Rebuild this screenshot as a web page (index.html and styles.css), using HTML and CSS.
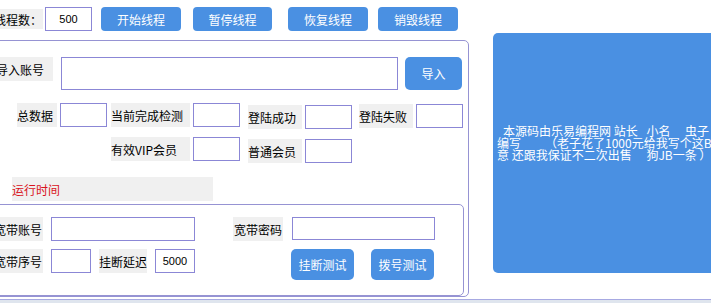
FILE: index.html
```html
<!DOCTYPE html>
<html lang="zh-CN">
<head>
<meta charset="utf-8">
<title>线程控制</title>
<link rel="stylesheet" href="styles.css">
</head>
<body>
<div class="page">
  <div class="main">
    <div class="left">
      <div class="toolbar">
        <span class="lbl lbl-threads">线程数：</span>
        <div class="box box-threads">500</div>
        <button class="btn btn-top btn-start">开始线程</button>
        <button class="btn btn-top btn-pause">暂停线程</button>
        <button class="btn btn-top btn-resume">恢复线程</button>
        <button class="btn btn-top btn-destroy">销毁线程</button>
      </div>
      <div class="frame">
        <div class="row row-import">
          <span class="lbl lbl-import">导入账号</span>
          <div class="box box-import"></div>
          <button class="btn btn-import">导入</button>
        </div>
        <div class="row row-stats">
          <div class="field f-total"><span class="lbl w40">总数据</span><div class="box w47"></div></div>
          <div class="field f-done"><span class="lbl w79">当前完成检测</span><div class="box w47"></div></div>
          <div class="field f-ok"><span class="lbl w54">登陆成功</span><div class="box w47"></div></div>
          <div class="field f-fail"><span class="lbl w54">登陆失败</span><div class="box w47"></div></div>
        </div>
        <div class="row row-members">
          <div class="field f-vip"><span class="lbl w79">有效VIP会员</span><div class="box w47"></div></div>
          <div class="field f-normal"><span class="lbl w54">普通会员</span><div class="box w47"></div></div>
        </div>
        <div class="row row-time">
          <span class="lbl lbl-time">运行时间</span>
        </div>
        <div class="inner">
          <div class="row row-bb1">
            <span class="lbl lbl-bb">宽带账号</span>
            <div class="box box-bbacc"></div>
            <span class="lbl lbl-pwd">宽带密码</span>
            <div class="box box-bbpwd"></div>
          </div>
          <div class="row row-bb2">
            <span class="lbl lbl-bb">宽带序号</span>
            <div class="box box-small"></div>
            <span class="lbl lbl-delay">挂断延迟</span>
            <div class="box box-small box-delay">5000</div>
            <button class="btn btn-test btn-hang">挂断测试</button>
            <button class="btn btn-test btn-dial">拨号测试</button>
          </div>
        </div>
      </div>
    </div>
    <div class="notice"><span class="line line-first">本源码由乐易编程网 站长&ensp; 小名&ensp;&ensp; 虫子</span><span class="line">编写&ensp;&ensp;&ensp;&ensp;（老子花了1000元给我写个这B玩</span><span class="line">意 还跟我保证不二次出售&ensp;&ensp; 狗JB一条 ）</span></div>
  </div>
  <div class="statusbar"></div>
</div>
</body>
</html>
```

FILE: styles.css
```css
html, body {
  margin: 0;
  padding: 0;
  overflow: hidden;
  background: #ffffff;
}

body {
  font-family: "Noto Sans CJK SC", "Noto Sans", sans-serif;
  font-size: 12px;
  color: #000000;
}

.page {
  width: 711px;
  height: 303px;
  overflow: hidden;
}

.main {
  display: flex;
  height: 299px;
  overflow: hidden;
}

.left {
  flex: 0 0 477px;
  width: 477px;
  margin-left: -8px;
}

/* generic pieces */
.lbl {
  display: flex;
  align-items: center;
  height: 24px;
  background: #f0f0f0;
  white-space: nowrap;
  box-sizing: border-box;
  flex-shrink: 0;
}

.box {
  box-sizing: border-box;
  height: 24px;
  border: 1px solid #8b87d6;
  background: #ffffff;
  flex-shrink: 0;
  display: flex;
  align-items: center;
  justify-content: center;
  font-family: "Liberation Sans", Arial, sans-serif;
  font-size: 11px;
}

.btn {
  box-sizing: border-box;
  border: none;
  margin: 0;
  padding: 0;
  background: #4a90e2;
  color: #ffffff;
  font-family: "Noto Sans CJK SC", sans-serif;
  font-size: 12px;
  flex-shrink: 0;
  display: flex;
  align-items: center;
  justify-content: center;
}

/* toolbar */
.toolbar {
  display: flex;
  align-items: center;
  height: 24px;
  margin-top: 7px;
}

.lbl-threads {
  width: 51px;
  height: 20px;
  justify-content: flex-end;
  padding-right: 1px;
}

.box-threads {
  width: 47px;
  margin-left: 2px;
}

.btn-top {
  width: 80px;
  height: 24px;
  border-radius: 4px;
}

.btn-start { margin-left: 9px; }
.btn-pause { margin-left: 12px; width: 79px; }
.btn-resume { margin-left: 16px; }
.btn-destroy { margin-left: 10px; }

/* outer frame */
.frame {
  box-sizing: border-box;
  width: 477px;
  height: 257px;
  margin-top: 9px;
  border: 1px solid #9693d3;
  border-radius: 5px;
}

.row {
  display: flex;
  align-items: flex-start;
}

.row-import {
  margin-top: 16px;
  height: 33px;
}

.lbl-import {
  width: 60px;
  justify-content: flex-end;
  padding-right: 9px;
}

.box-import {
  width: 337px;
  height: 33px;
  margin-left: 8px;
}

.btn-import {
  width: 57px;
  height: 33px;
  margin-left: 7px;
  border-radius: 5px;
}

.row-stats {
  margin-top: 13px;
  height: 26px;
}

.row-members {
  margin-top: 8px;
  height: 26px;
}

.field {
  display: flex;
  gap: 3px;
  flex-shrink: 0;
}

.w40 { width: 40px; }
.w54 { width: 54px; }
.w79 { width: 79px; }
.w47 { width: 47px; }

.f-total { margin-left: 24px; }
.f-done { margin-left: 4px; }
.f-ok { margin-left: 8px; margin-top: 2px; }
.f-fail { margin-left: 7px; margin-top: 1px; }
.f-vip { margin-left: 118px; }
.f-normal { margin-left: 8px; margin-top: 2px; }

.row-time {
  margin-top: 14px;
  height: 24px;
}

.lbl-time {
  width: 201px;
  margin-left: 19px;
  color: #d9121b;
}

/* inner frame */
.inner {
  box-sizing: border-box;
  width: 471px;
  height: 92px;
  margin-top: 3px;
  border: 1px solid #9693d3;
  border-radius: 5px;
  padding-top: 12px;
}

.row-bb1 {
  height: 24px;
}

.row-bb2 {
  margin-top: 8px;
  height: 31px;
}

.lbl-bb {
  width: 49px;
  justify-content: flex-end;
  padding-right: 1px;
}

.box-bbacc {
  width: 144px;
  margin-left: 8px;
}

.lbl-pwd {
  width: 50px;
  margin-left: 38px;
  justify-content: center;
}

.box-bbpwd {
  width: 143px;
  height: 23px;
  margin-left: 9px;
}

.box-small {
  width: 40px;
  margin-left: 8px;
}

.lbl-delay {
  width: 48px;
  margin-left: 8px;
  justify-content: center;
}

.btn-test {
  width: 63px;
  height: 31px;
  border-radius: 5px;
}

.btn-hang { margin-left: 96px; }
.btn-dial { margin-left: 17px; }

/* right notice panel */
.notice {
  flex: 0 0 240px;
  width: 240px;
  height: 240px;
  margin-left: 24px;
  margin-top: 33px;
  box-sizing: border-box;
  padding: 92px 0 0 4px;
  background: #4a90e2;
  border-radius: 5px;
  color: #ffffff;
  font-size: 12px;
  line-height: 12px;
  white-space: pre;
  overflow: hidden;
}

.line {
  display: block;
  height: 12px;
}

.line-first {
  padding-left: 6px;
}

/* bottom status strip */
.statusbar {
  height: 3px;
  border-top: 1px solid #a7a9e2;
  background: #dfe5ee;
}
```
